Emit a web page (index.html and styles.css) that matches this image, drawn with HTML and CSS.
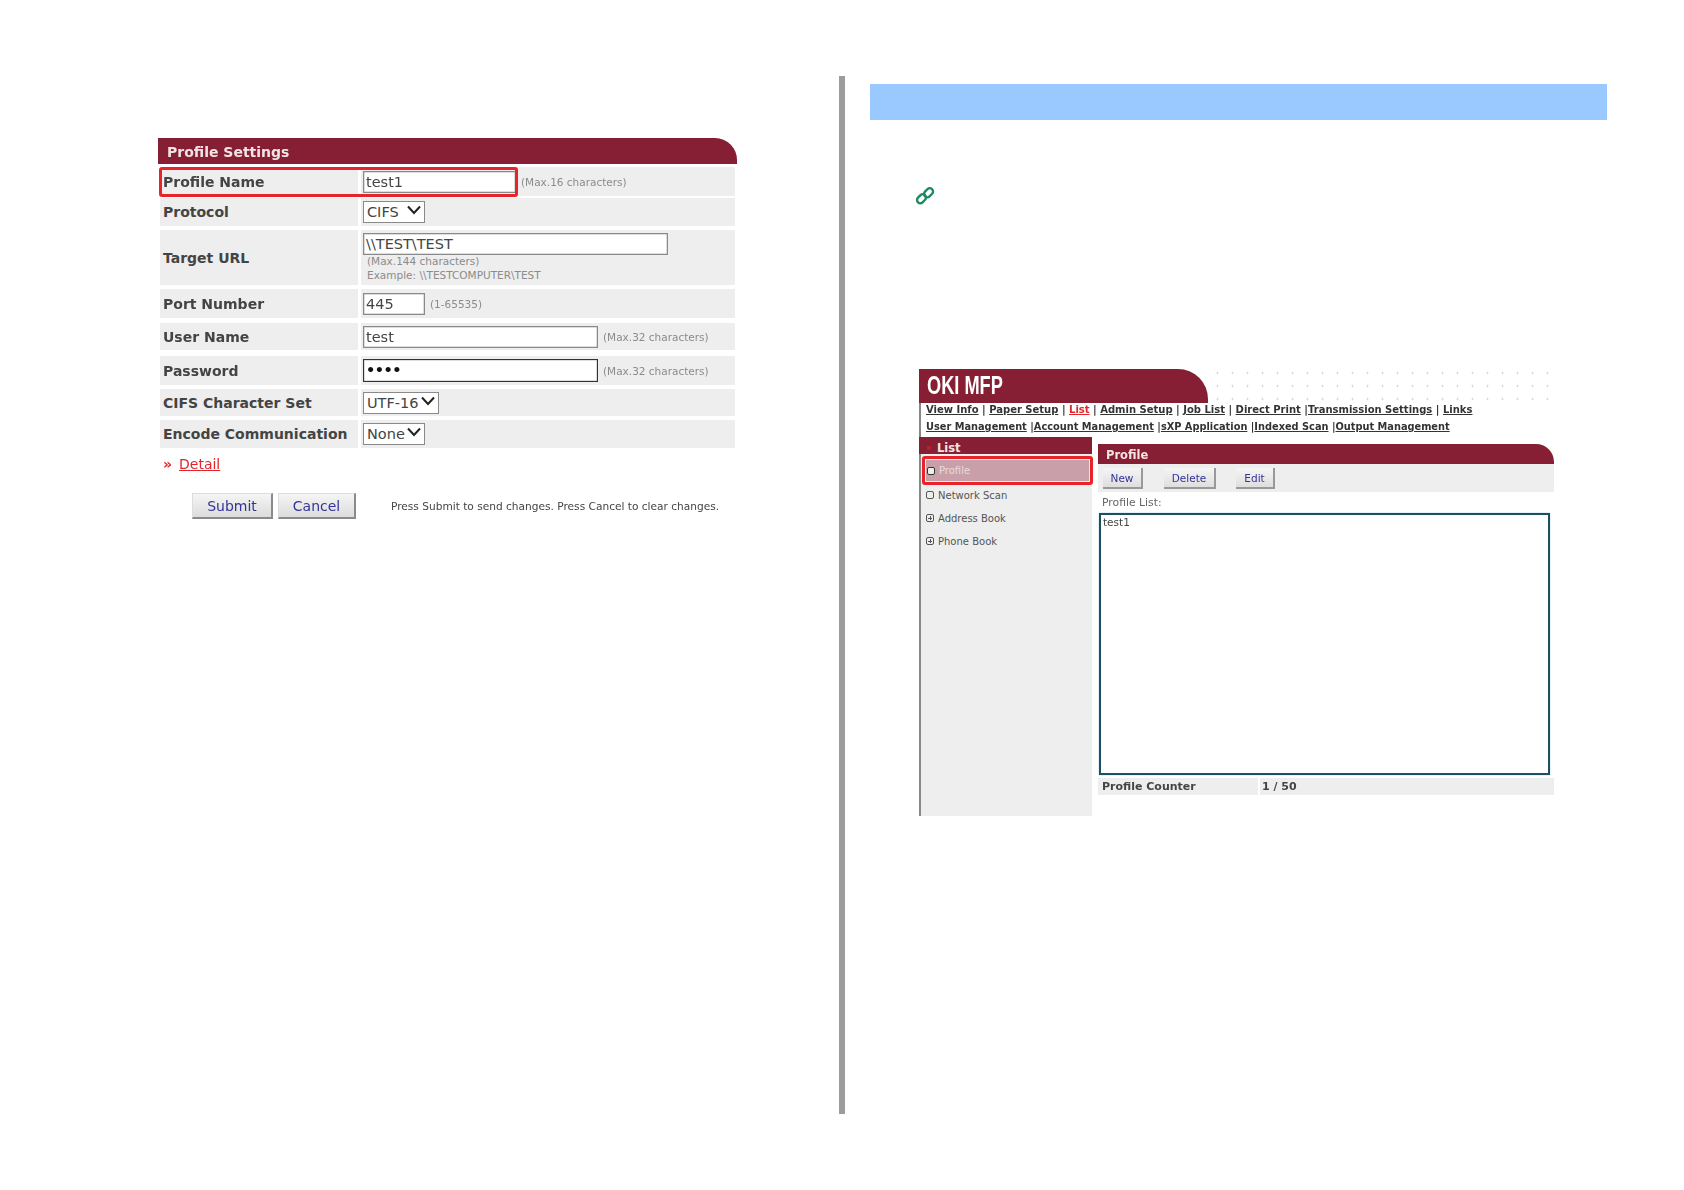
FILE: index.html
```html
<!DOCTYPE html>
<html lang="en">
<head>
<meta charset="utf-8">
<title>Profile Settings</title>
<link rel="stylesheet" href="styles.css">
</head>
<body>
<div class="page">
  <section class="left">
    <div class="form">
      <div class="form-title">Profile Settings</div>
      <div class="row r-name">
        <div class="lab">Profile Name</div>
        <div class="val"><div class="inp w-name">test1</div><span class="hint">(Max.16 characters)</span></div>
        <div class="redbox"></div>
      </div>
      <div class="row r-proto">
        <div class="lab">Protocol</div>
        <div class="val"><div class="sel w-proto">CIFS<svg class="chev" viewBox="0 0 14 10"><path d="M1 1.500L7 8L13 1.500"/></svg></div></div>
      </div>
      <div class="row r-url">
        <div class="lab">Target URL</div>
        <div class="val col">
          <div class="inp w-url">\\TEST\TEST</div>
          <div class="hint h-a">(Max.144 characters)</div>
          <div class="hint h-b">Example: \\TESTCOMPUTER\TEST</div>
        </div>
      </div>
      <div class="row r-port">
        <div class="lab">Port Number</div>
        <div class="val"><div class="inp w-port">445</div><span class="hint">(1-65535)</span></div>
      </div>
      <div class="row r-user">
        <div class="lab">User Name</div>
        <div class="val"><div class="inp w-user">test</div><span class="hint">(Max.32 characters)</span></div>
      </div>
      <div class="row r-pass">
        <div class="lab">Password</div>
        <div class="val"><div class="inp w-user focus">••••</div><span class="hint">(Max.32 characters)</span></div>
      </div>
      <div class="row r-cifs">
        <div class="lab">CIFS Character Set</div>
        <div class="val"><div class="sel w-cifs">UTF-16<svg class="chev" viewBox="0 0 14 10"><path d="M1 1.500L7 8L13 1.500"/></svg></div></div>
      </div>
      <div class="row r-enc">
        <div class="lab">Encode Communication</div>
        <div class="val"><div class="sel w-proto">None<svg class="chev" viewBox="0 0 14 10"><path d="M1 1.500L7 8L13 1.500"/></svg></div></div>
      </div>
      <div class="detail"><span class="raquo">»</span><a class="detail-link">Detail</a></div>
      <div class="actions">
        <div class="btn b-submit">Submit</div>
        <div class="btn b-cancel">Cancel</div>
        <div class="press">Press Submit to send changes. Press Cancel to clear changes.</div>
      </div>
    </div>
  </section>
  <div class="divider"></div>
  <section class="right">
    <div class="band"></div>
    <svg class="link" viewBox="0 0 20 20">
      <g fill="none" stroke="#1f8a5f" stroke-width="2.400">
        <rect x="1.500" y="9.500" width="10" height="6.500" rx="3.200" transform="rotate(-45 6.500 12.700)"/>
        <rect x="8.500" y="3.500" width="10" height="6.500" rx="3.200" transform="rotate(-45 13.500 6.700)"/>
      </g>
    </svg>
    <div class="mfp">
      <div class="mfp-top">
        <div class="logo"><span class="logo-text">OKI MFP</span></div>
        <div class="dots"></div>
      </div>
      <nav class="nav">
        <div class="nav-row"><a>View Info</a> | <a>Paper Setup</a> | <a class="cur">List</a> | <a>Admin Setup</a> | <a>Job List</a> | <a>Direct Print</a> |<a>Transmission Settings</a> | <a>Links</a></div>
        <div class="nav-row nav-second"><a>User Management</a> |<a>Account Management</a> |<a>sXP Application</a> |<a>Indexed Scan</a> |<a>Output Management</a></div>
      </nav>
      <div class="mfp-body">
        <aside class="side">
          <div class="side-head"><span class="mark"></span>List</div>
          <div class="side-item on"><span class="ico"></span>Profile</div>
          <div class="side-item i-net"><span class="ico"></span>Network Scan</div>
          <div class="side-item i-addr"><span class="ico plus"></span>Address Book</div>
          <div class="side-item i-phone"><span class="ico plus"></span>Phone Book</div>
        </aside>
        <div class="main">
          <div class="main-head">Profile</div>
          <div class="toolbar">
            <div class="tbtn t-new">New</div>
            <div class="tbtn t-del">Delete</div>
            <div class="tbtn t-edit">Edit</div>
          </div>
          <div class="plist-label">Profile List:</div>
          <div class="plist">test1</div>
          <div class="counter"><div class="c-lab">Profile Counter</div><div class="c-val">1 / 50</div></div>
        </div>
      </div>
    </div>
  </section>
</div>
</body>
</html>
```

FILE: styles.css
```css
* { box-sizing: border-box; }
html, body { margin: 0; padding: 0; background: #fff; }
body { width: 1684px; height: 1190px; overflow: hidden; font-family: "DejaVu Sans", sans-serif; color: #444; }
.page { display: flex; align-items: flex-start; padding-top: 76px; }

.left { width: 839px; padding: 62px 0 0 158px; }
.form { width: 579px; filter: blur(.55px); }
.form-title { height: 26px; background: #861f33; border-top-right-radius: 22px; color: #f3e4e4; font-weight: 700; font-size: 14px; line-height: 28px; padding-left: 9px; margin-bottom: 3px; }
.row { position: relative; display: flex; margin: 0 2px; gap: 3px; }
.lab { width: 198px; flex: none; background: #eee; font-weight: 700; font-size: 14px; color: #444; padding-left: 3px; display: flex; align-items: center; }
.val { flex: 1; background: #eee; display: flex; align-items: center; padding-left: 2px; }
.val.col { flex-direction: column; align-items: flex-start; }
.r-name { height: 29px; margin-bottom: 2px; }
.r-proto { height: 28px; margin-bottom: 4px; }
.r-url { height: 55px; margin-bottom: 4px; }
.r-port { height: 29px; margin-bottom: 5px; }
.r-user { height: 27px; margin-bottom: 6px; }
.r-pass { height: 29px; margin-bottom: 4px; }
.r-cifs { height: 27px; margin-bottom: 4px; }
.r-enc { height: 28px; }
.inp { height: 22px; background: #fff; border: 1px solid #8a8a8a; color: #444; font-size: 14.500px; line-height: 20px; padding-left: 2px; box-shadow: inset 0 0 0 .5px #bbb; }
.inp.focus { height: 23px; border: 1.500px solid #333; color: #111; font-weight: 700; letter-spacing: -.5px; }
.sel { height: 22px; background: #fff; border: 1px solid #8a8a8a; color: #444; font-size: 14.500px; line-height: 20px; padding-left: 3px; position: relative; }
.chev { position: absolute; right: 3px; top: 3px; width: 14px; height: 10px; fill: none; stroke: #222; stroke-width: 2; }
.w-name { width: 153px; }
.w-proto { width: 62px; }
.w-cifs { width: 76px; }
.w-url { width: 305px; margin-top: 3px; flex: none; }
.w-port { width: 62px; }
.w-user { width: 235px; }
.hint { font-size: 10.500px; color: #8b8b8b; margin-left: 5px; white-space: nowrap; }
.h-a, .h-b { margin-left: 4px; line-height: 14px; }
.h-a { margin-top: -1px; }
.redbox { position: absolute; left: -1px; top: 0; width: 359px; height: 30px; border: 3px solid #e8242a; border-radius: 3px; }

.detail { height: 45px; padding: 6px 0 0 5px; font-size: 14px; display: flex; align-items: flex-start; line-height: 20px; }
.raquo { color: #e2252b; font-weight: 700; width: 16px; }
.detail-link { color: #e2252b; text-decoration: underline; }
.actions { display: flex; align-items: center; padding-left: 34px; }
.btn { height: 26px; background: linear-gradient(#f5f5f5, #dcdcdc); border-right: 2px solid #8a8a8a; border-bottom: 2px solid #8a8a8a; border-top: 1px solid #ddd; border-left: 1px solid #ddd; color: #33339a; font-size: 14px; text-align: center; line-height: 24px; }
.b-submit { width: 81px; margin-right: 5px; }
.b-cancel { width: 78px; }
.press { margin-left: 35px; font-size: 10.600px; color: #444; white-space: nowrap; }

.divider { width: 6px; height: 1038px; background: #9c9c9c; flex: none; }

.right { width: 839px; padding: 8px 0 0 25px; }
.band { width: 737px; height: 36px; background: #99c9ff; }
.link { display: block; width: 20px; height: 20px; margin: 66px 0 0 45px; }
.mfp { margin: 163px 0 0 49px; width: 635px; filter: blur(.55px); }
.mfp-top { display: flex; height: 34px; }
.logo { width: 289px; background: #861f33; border-top-right-radius: 30px; color: #fff; font-family: "Liberation Sans", sans-serif; font-weight: 700; font-size: 26px; line-height: 33px; padding-left: 8px; overflow: hidden; }
.logo-text { display: inline-block; transform: scaleX(.7); transform-origin: left center; white-space: nowrap; }
.dots { flex: 1; margin-right: 2px; background-image: radial-gradient(circle, #c4c4c4 0.800px, transparent 1.100px); background-size: 15px 13px; background-position: 2px -2.500px; }
.nav { padding: 0 0 0 5px; border-left: 2px solid #888; height: 34px; font-size: 10px; font-weight: 700; color: #333; }
.nav-row { height: 17px; line-height: 13px; white-space: nowrap; }
.nav-second { font-size: 9.800px; }
.nav a { text-decoration: underline; color: #333; }
.nav a.cur { color: #e2252b; }

.mfp-body { display: flex; align-items: flex-start; }
.side { width: 173px; height: 379px; background: #eee; border-left: 2px solid #888; font-size: 10px; color: #555; position: relative; }
.side-head { height: 17px; background: #861f33; color: #f3e4e4; font-weight: 700; font-size: 11.500px; line-height: 23px; padding-left: 18px; margin-left: -2px; position: relative; overflow: hidden; }
.mark { position: absolute; left: 8px; top: 9px; width: 4px; height: 4px; background: #b0222f; }
.side-item { display: flex; align-items: center; padding-left: 5px; white-space: nowrap; }
.ico { width: 8px; height: 8px; border: 1px solid #555; border-radius: 2px; margin-right: 4px; flex: none; position: relative; }
.ico.plus::before { content: ""; position: absolute; left: 1px; right: 1px; top: 2.500px; height: 1px; background: #555; }
.ico.plus::after { content: ""; position: absolute; top: 1px; bottom: 1px; left: 2.500px; width: 1px; background: #555; }
.side-item.on { margin: 2px -1px 0 1px; padding-left: 2px; height: 29px; background: #c9a0aa; color: #ead9dc; border: 3px solid #e8242a; border-radius: 3px; box-shadow: inset 0 0 0 1px #eee; }
.side-item.on .ico { border-color: #333; background: #eee; }
.i-net { height: 20px; }
.i-addr { height: 24px; margin-top: 1px; }
.i-phone { height: 22px; }

.main { margin: 7px 0 0 6px; width: 456px; }
.main-head { height: 20px; background: #861f33; border-top-right-radius: 18px; color: #f3e4e4; font-weight: 700; font-size: 11.500px; line-height: 22px; padding-left: 8px; }
.toolbar { height: 28px; background: #eee; display: flex; align-items: center; padding-left: 5px; }
.tbtn { height: 21px; background: linear-gradient(#f5f5f5, #dedede); border-right: 2px solid #999; border-bottom: 2px solid #999; color: #33339a; font-size: 10.500px; text-align: center; line-height: 20px; }
.t-new { width: 40px; margin-right: 21px; }
.t-del { width: 52px; margin-right: 20px; }
.t-edit { width: 39px; }
.plist-label { height: 21px; font-size: 10.800px; color: #666; padding: 4px 0 0 4px; line-height: 14px; }
.plist { width: 451px; height: 262px; margin-left: 1px; border: 2px solid #1f4e63; background: #fff; font-size: 10.500px; color: #444; padding: 1px 2px; box-shadow: 0 0 1px #5aa6c8; }
.counter { display: flex; height: 17px; margin-top: 3px; background: #eee; font-size: 11px; font-weight: 700; color: #444; line-height: 17px; }
.c-lab { width: 162px; padding-left: 4px; border-right: 2px solid #fff; }
.c-val { padding-left: 2px; }
```
